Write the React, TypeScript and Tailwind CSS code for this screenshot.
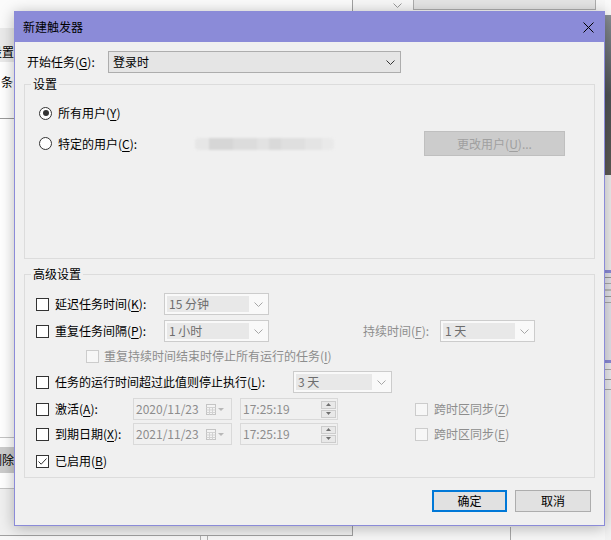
import React from 'react';

const FONT = "font-['Noto_Sans_CJK_SC','Noto_Sans',sans-serif]";

function Key({ k }: { k: string }) {
  return (
    <>
      (<span className="underline underline-offset-[2px]">{k}</span>)
    </>
  );
}

function Chevron({ color }: { color: string }) {
  return (
    <svg width="9" height="5" viewBox="0 0 9 5">
      <path d="M0.5 0.5 L4.5 4.5 L8.5 0.5" fill="none" stroke={color} strokeWidth="1" />
    </svg>
  );
}

function CheckBox({ checked = false, disabled = false }: { checked?: boolean; disabled?: boolean }) {
  return (
    <div
      className={
        disabled
          ? 'w-[13px] h-[13px] shrink-0 border border-[#cccccc] bg-[#f7f7f7]'
          : 'w-[13px] h-[13px] shrink-0 border border-[#333333] bg-white flex items-center justify-center'
      }
    >
      {checked && (
        <svg width="11" height="11" viewBox="0 0 11 11">
          <path d="M1.5 5.5 L4.2 8.2 L9.5 2.5" fill="none" stroke="#333333" strokeWidth="1" />
        </svg>
      )}
    </div>
  );
}

function Radio({ checked = false }: { checked?: boolean }) {
  return (
    <div className="w-[13px] h-[13px] shrink-0 rounded-full border border-[#333333] bg-white flex items-center justify-center">
      {checked && <div className="w-[6px] h-[6px] rounded-full bg-[#333333]" />}
    </div>
  );
}

function DisabledCombo({ text, className }: { text: string; className: string }) {
  return (
    <div className={`${className} h-[22px] shrink-0 border border-[#cccccc] bg-[#f9f9f9] flex items-stretch`}>
      <div className="flex-1 my-[2px] ml-[2px] bg-[#e8e8e8] text-[#6d6d6d] pl-[2px] flex items-center">{text}</div>
      <div className="w-[19px] flex items-center justify-center">
        <Chevron color="#a6a6a6" />
      </div>
    </div>
  );
}

function CalendarIcon() {
  return (
    <svg width="20" height="11" viewBox="0 0 20 11">
      <rect x="0.5" y="0.5" width="9" height="10" fill="#f4f4f4" stroke="#c4c4c4" />
      <path d="M0.5 3.5 H9.5 M0.5 6 H9.5 M0.5 8.5 H9.5 M3.5 3.5 V10.5 M6.5 3.5 V10.5" stroke="#d2d2d2" strokeWidth="1" />
      <path d="M12 4 L18 4 L15 7 Z" fill="#b8b8b8" />
    </svg>
  );
}

function DateBox({ text }: { text: string }) {
  return (
    <div className="w-[99px] h-[22px] shrink-0 border border-[#d9d9d9] bg-[#f0f0f0] flex items-center text-[#8d8d8d]">
      <span className="pl-[2px] flex-1">{text}</span>
      <div className="mr-[5px] flex items-center">
        <CalendarIcon />
      </div>
    </div>
  );
}

function TimeBox({ text }: { text: string }) {
  return (
    <div className="ml-[8px] w-[98px] h-[22px] shrink-0 border border-[#d9d9d9] bg-[#f0f0f0] flex items-center text-[#8d8d8d]">
      <span className="pl-[2px] flex-1">{text}</span>
      <div className="mr-[1px] flex flex-col gap-[1px]">
        <div className="w-[15px] h-[8px] border border-[#cccccc] bg-[#e8e8e8] flex items-center justify-center">
          <svg width="5" height="3" viewBox="0 0 5 3">
            <path d="M0 3 L2.5 0 L5 3 Z" fill="#707070" />
          </svg>
        </div>
        <div className="w-[15px] h-[8px] border border-[#cccccc] bg-[#e8e8e8] flex items-center justify-center">
          <svg width="5" height="3" viewBox="0 0 5 3">
            <path d="M0 0 L5 0 L2.5 3 Z" fill="#707070" />
          </svg>
        </div>
      </div>
    </div>
  );
}

function Desktop() {
  return (
    <>
      {/* window behind, left */}
      <div className="absolute left-0 top-0 w-[353px] h-[536px] bg-white border-r border-b border-[#a0a0a0]">
        <div className="h-[28px] bg-[#fbfbfb]" />
        <div className="h-[34px] bg-[#ebebeb] relative">
          <span className="absolute left-[-10px] top-[16px] text-[12px] leading-[16px]">设置</span>
        </div>
        <div className="relative h-[56px]">
          <span className="absolute left-[1px] top-[12px] text-[12px] leading-[16px]">条</span>
        </div>
        <div className="h-px bg-[#9a9a9a]" />
        <div className="h-[318px]" />
        <div className="h-px bg-[#c4c4c4]" />
        <div className="mt-[9px] h-[26px] bg-[#cccccc] relative">
          <span className="absolute left-[-10px] top-[5px] text-[12px] leading-[16px]">删除</span>
        </div>
        <div className="mt-[15px] h-px bg-[#c4c4c4]" />
        <div className="h-[46px] bg-[#f0f0f0]" />
      </div>
      {/* top combo chevron and box */}
      <div className="absolute left-[393px] top-[3px]">
        <Chevron color="#9a9a9a" />
      </div>
      <div className="absolute left-[413px] top-0 w-[183px] h-[10px] bg-[#e5e5e5] border-x border-b border-[#adadad]" />
      {/* right strip */}
      <div className="absolute left-[605px] top-0 w-[6px] h-[540px] flex flex-col">
        <div className="h-[15px] bg-[#fafafa]" />
        <div className="h-[160px] bg-gradient-to-b from-[#8a9096] via-[#4f5356] to-[#5d5a55]" />
        <div className="h-[95px] bg-[#eeeeee]" />
        <div className="h-[3px] bg-[#8b8bd8]" />
        <div className="h-[87px] bg-[#e3e3ea] flex flex-col gap-[5px] pt-[4px]">
          <div className="h-px bg-[#999]" />
          <div className="h-px bg-[#aaa]" />
          <div className="h-[2px] bg-[#bbb]" />
          <div className="h-px bg-[#999]" />
          <div className="h-px bg-[#aaa]" />
        </div>
        <div className="h-[3px] bg-[#8b8bd8]" />
        <div className="h-[57px] bg-[#ececf0] flex flex-col gap-[9px] pt-[6px]">
          <div className="h-px bg-[#aaa]" />
          <div className="h-px bg-[#999]" />
          <div className="h-px bg-[#aaa]" />
        </div>
        <div className="flex-1 bg-[#f2f2f2]" />
      </div>
      <div className="absolute left-[510px] top-[527px] w-px h-[13px] bg-[#a8a8a8]" />
      <div className="absolute left-[200px] top-[536px] w-px h-[4px] bg-[#b0b0b0]" />
      <div className="absolute left-[207px] top-[536px] w-px h-[4px] bg-[#b0b0b0]" />
    </>
  );
}

export default function App() {
  return (
    <div className={`relative w-[611px] h-[540px] overflow-hidden bg-[#f7f7f7] text-[12px] leading-[16px] text-black ${FONT}`}>
      <Desktop />

      <div className="absolute left-[14px] top-[11px] w-[591px] h-[515px] border border-[#8b8bd8] bg-[#f0f0f0] shadow-[0_2px_14px_rgba(0,0,0,0.28)] flex flex-col">
        {/* title bar */}
        <div className="h-[30px] shrink-0 bg-[#8b8bd8] flex items-center pl-[8px]">
          <span>新建触发器</span>
          <svg className="ml-auto mr-[10px]" width="11" height="11" viewBox="0 0 11 11">
            <path d="M0.5 0.5 L10.5 10.5 M10.5 0.5 L0.5 10.5" stroke="#000" strokeWidth="1" />
          </svg>
        </div>

        {/* start task */}
        <div className="mt-[9px] h-[22px] flex items-center pl-[12px]">
          <span className="w-[81px]">
            开始任务<Key k="G" />:
          </span>
          <div className="w-[293px] h-[22px] border border-[#adadad] bg-[#e5e5e5] flex items-center pl-[4px] pr-[5px]">
            <span className="flex-1">登录时</span>
            <Chevron color="#333333" />
          </div>
        </div>

        {/* settings group */}
        <fieldset className="mt-[3px] mx-[9px] border border-[#dcdcdc]">
          <legend className="ml-[6px] px-[2px]">设置</legend>
          <div className="h-[166px] flex flex-col">
            <div className="mt-[13px] h-[16px] flex items-center pl-[14px] gap-[6px]">
              <Radio checked />
              <span>
                所有用户<Key k="Y" />
              </span>
            </div>
            <div className="mt-[10px] h-[25px] flex items-center pl-[14px]">
              <Radio />
              <span className="ml-[6px] w-[137px]">
                特定的用户<Key k="C" />:
              </span>
              <div className="w-[139px] h-[12px] flex blur-[1px] rounded-sm overflow-hidden">
                <div className="w-[14px] bg-[#e6e6e6]" />
                <div className="w-[24px] bg-[#d6d6d6]" />
                <div className="w-[24px] bg-[#dcdcdc]" />
                <div className="w-[12px] bg-[#e2e2e2]" />
                <div className="w-[12px] bg-[#d9d9d9]" />
                <div className="w-[24px] bg-[#dfdfdf]" />
                <div className="w-[17px] bg-[#e4e4e4]" />
                <div className="w-[12px] bg-[#e9e9e9]" />
              </div>
              <div className="ml-auto mr-[29px] w-[141px] h-[25px] border border-[#bfbfbf] bg-[#cccccc] text-[#a0a0a0] flex items-center justify-center">
                <span>
                  更改用户<Key k="U" />...
                </span>
              </div>
            </div>
          </div>
        </fieldset>

        {/* advanced group */}
        <fieldset className="mt-[7px] mx-[9px] border border-[#dcdcdc]">
          <legend className="ml-[6px] px-[2px]">高级设置</legend>
          <div className="flex flex-col pl-[11px] pb-[8px]">
            <div className="mt-[11px] h-[22px] flex items-center">
              <CheckBox />
              <span className="ml-[6px] w-[109px]">
                延迟任务时间<Key k="K" />:
              </span>
              <DisabledCombo className="w-[105px]" text="15 分钟" />
            </div>
            <div className="mt-[5px] h-[22px] flex items-center">
              <CheckBox />
              <span className="ml-[6px] w-[109px]">
                重复任务间隔<Key k="P" />:
              </span>
              <DisabledCombo className="w-[105px]" text="1 小时" />
              <span className="ml-[94px] w-[77px] text-[#8d8d8d]">
                持续时间<Key k="F" />:
              </span>
              <DisabledCombo className="w-[95px]" text="1 天" />
            </div>
            <div className="mt-[6px] h-[16px] flex items-center pl-[50px]">
              <CheckBox disabled />
              <span className="ml-[5px] text-[#8d8d8d]">
                重复持续时间结束时停止所有运行的任务<Key k="I" />
              </span>
            </div>
            <div className="mt-[7px] h-[22px] flex items-center">
              <CheckBox />
              <span className="ml-[6px] w-[238px]">
                任务的运行时间超过此值则停止执行<Key k="L" />:
              </span>
              <DisabledCombo className="w-[99px]" text="3 天" />
            </div>
            <div className="mt-[5px] h-[22px] flex items-center">
              <CheckBox />
              <span className="ml-[6px] w-[78px]">
                激活<Key k="A" />:
              </span>
              <DateBox text="2020/11/23" />
              <TimeBox text="17:25:19" />
              <div className="ml-[77px]">
                <CheckBox disabled />
              </div>
              <span className="ml-[6px] text-[#8d8d8d]">
                跨时区同步<Key k="Z" />
              </span>
            </div>
            <div className="mt-[3px] h-[22px] flex items-center">
              <CheckBox />
              <span className="ml-[6px] w-[78px]">
                到期日期<Key k="X" />:
              </span>
              <DateBox text="2021/11/23" />
              <TimeBox text="17:25:19" />
              <div className="ml-[77px]">
                <CheckBox disabled />
              </div>
              <span className="ml-[6px] text-[#8d8d8d]">
                跨时区同步<Key k="E" />
              </span>
            </div>
            <div className="mt-[8px] h-[16px] flex items-center">
              <CheckBox checked />
              <span className="ml-[6px]">
                已启用<Key k="B" />
              </span>
            </div>
          </div>
        </fieldset>

        {/* buttons */}
        <div className="mt-[12px] flex justify-end gap-[8px] pr-[13px]">
          <div className="w-[75px] h-[22px] border-2 border-[#0078d7] bg-[#e1e1e1] flex items-center justify-center">确定</div>
          <div className="w-[76px] h-[22px] border border-[#adadad] bg-[#e1e1e1] flex items-center justify-center">取消</div>
        </div>
      </div>
    </div>
  );
}
